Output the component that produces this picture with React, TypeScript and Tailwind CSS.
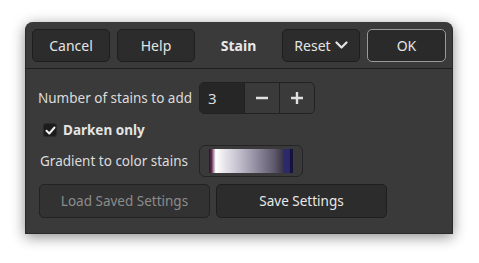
import React from 'react';

const font = { fontFamily: '"Noto Sans", "Open Sans", sans-serif' };

const HeaderButton: React.FC<{ children: React.ReactNode; primary?: boolean; className?: string }> = ({ children, primary, className }) => (
    <button
        className={`h-[33px] rounded-[5px] border text-[14px] text-[#e4e4e4] flex items-center justify-center ${primary ? 'border-[#9a9a9a] bg-[#2a2a2a]' : 'border-[#1e1e1e] bg-[#2c2c2c]'} ${className ?? ''}`}
    >
        {children}
    </button>
);

export default function App() {
    return (
        <div className="w-[479px] h-[263px] bg-white pt-[22px] pl-[25px]" style={font}>
            <div className="w-[428px] h-[212px] bg-[#3a3a3a] rounded-t-[8px] shadow-[0_3px_14px_rgba(0,0,0,0.45)] border-x border-b border-[#2a2a2a] flex flex-col">
                {/* header bar */}
                <div className="h-[47px] border-b border-[#1f1f1f] flex items-center px-[6px]">
                    <div className="flex gap-[7px]">
                        <HeaderButton className="w-[78px]">Cancel</HeaderButton>
                        <HeaderButton className="w-[78px]">Help</HeaderButton>
                    </div>
                    <div className="flex-1 text-center text-[14px] font-bold text-[#e8e8e8]">Stain</div>
                    <div className="flex gap-[7px]">
                        <HeaderButton className="w-[78px] gap-[4px]">
                            Reset
                            <svg width="13" height="9" viewBox="0 0 13 9" fill="none">
                                <path d="M1.5 1.5 L6.5 6.5 L11.5 1.5" stroke="#e4e4e4" strokeWidth="2.2" strokeLinecap="round" strokeLinejoin="round" />
                            </svg>
                        </HeaderButton>
                        <HeaderButton primary className="w-[79px]">OK</HeaderButton>
                    </div>
                </div>

                {/* body */}
                <div className="flex flex-col pl-[12px] pt-[13px] text-[13.5px] text-[#dcdcdc]">
                    <div className="flex items-center h-[32px]">
                        <span className="w-[161px]">Number of stains to add</span>
                        <div className="flex h-[32px] rounded-[5px] border border-[#222] overflow-hidden">
                            <div className="w-[44px] bg-[#262626] pl-[8px] flex items-center text-[15px]">3</div>
                            <div className="w-[35px] border-l border-[#222] flex items-center justify-center">
                                <svg width="14" height="14" viewBox="0 0 14 14"><path d="M1 7 H13" stroke="#e0e0e0" strokeWidth="2.4" /></svg>
                            </div>
                            <div className="w-[35px] border-l border-[#222] flex items-center justify-center">
                                <svg width="14" height="14" viewBox="0 0 14 14"><path d="M1 7 H13 M7 1 V13" stroke="#e0e0e0" strokeWidth="2.4" /></svg>
                            </div>
                        </div>
                    </div>

                    <div className="flex items-center h-[22px] mt-[5px] pl-[5px] gap-[6px]">
                        <div className="w-[14px] h-[14px] rounded-[3px] bg-[#1c1c1c] border border-[#2a2a2a] flex items-center justify-center">
                            <svg width="11" height="11" viewBox="0 0 11 11" fill="none">
                                <path d="M1.5 5.8 L4.3 8.5 L9.5 2.5" stroke="#f2f2f2" strokeWidth="2" strokeLinecap="round" strokeLinejoin="round" />
                            </svg>
                        </div>
                        <span className="font-bold text-[#e4e4e4]">Darken only</span>
                    </div>

                    <div className="flex items-center h-[32px] mt-[4px]">
                        <span className="w-[161px] pl-[2px]">Gradient to color stains</span>
                        <div className="w-[104px] h-[32px] rounded-[6px] border border-[#242424] px-[9px] py-[3px]">
                            <div className="h-full w-full bg-[linear-gradient(to_right,#3a0b2c_0%,#5b2a4c_3%,#ffffff_8%,#e8e6ec_18%,#bdb9c8_38%,#8e889c_58%,#5e586c_78%,#3a3446_88%,#2c2a6c_89%,#2a286a_96%,#14123a_97%,#16143c_100%)]" />
                        </div>
                    </div>

                    <div className="flex gap-[6px] mt-[7px] pl-[1px]">
                        <button className="w-[171px] h-[34px] rounded-[5px] border border-[#222] bg-[#323232] text-[#8c8c8c]">Load Saved Settings</button>
                        <button className="w-[171px] h-[34px] rounded-[5px] border border-[#1e1e1e] bg-[#2c2c2c] text-[#e8e8e8]">Save Settings</button>
                    </div>
                </div>
            </div>
        </div>
    );
}
